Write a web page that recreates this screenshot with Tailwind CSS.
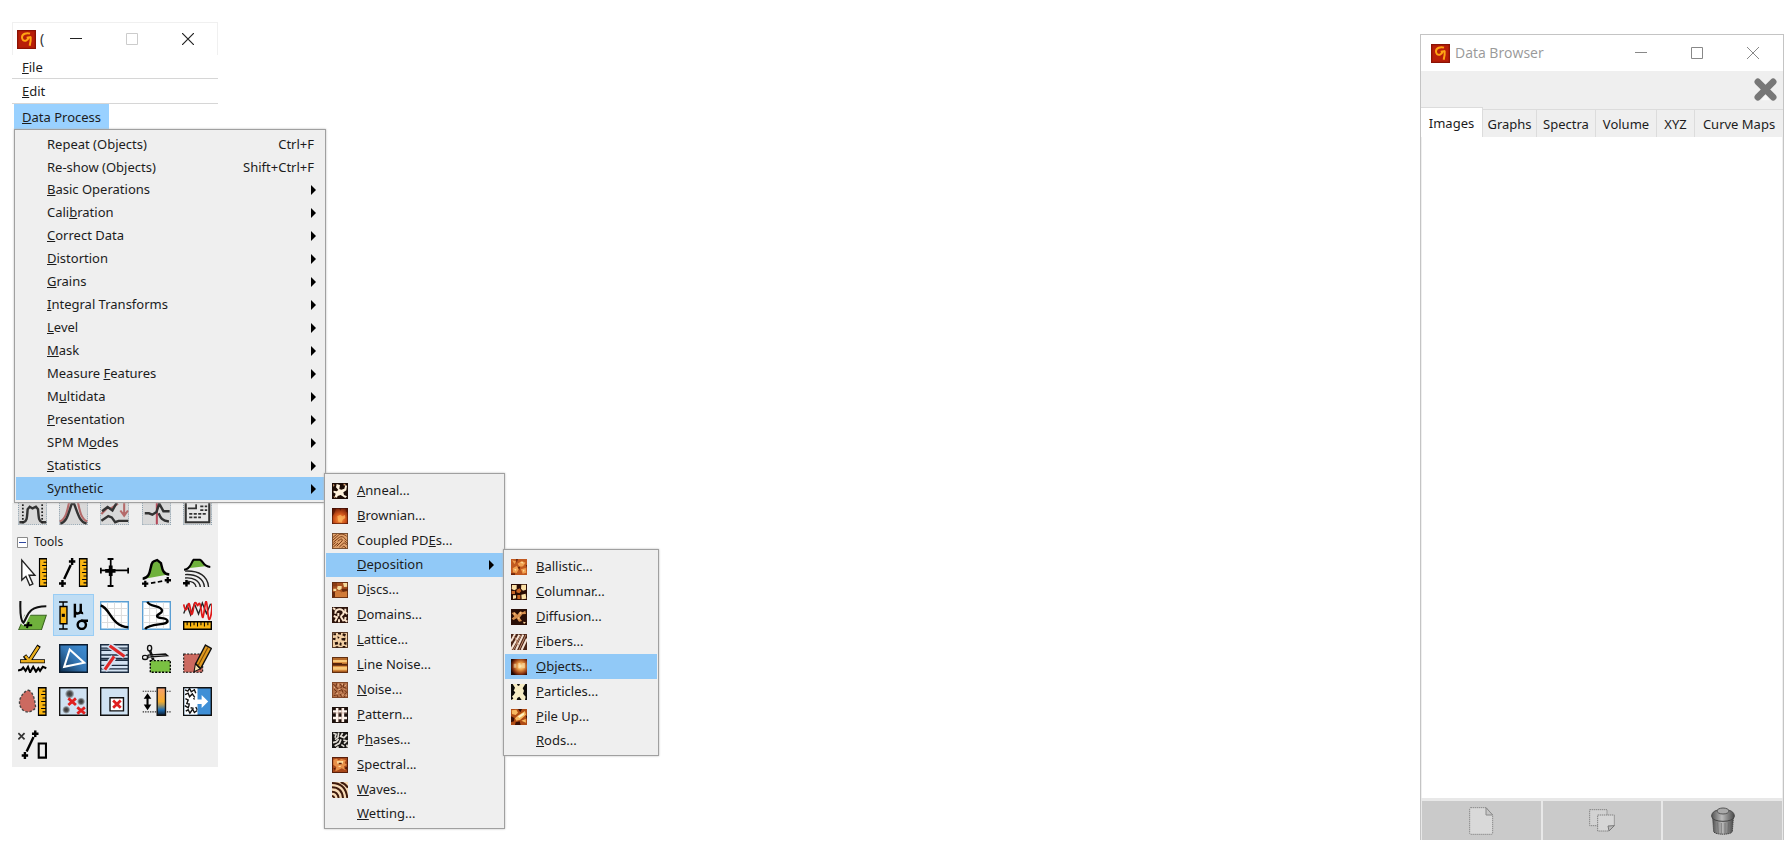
<!DOCTYPE html>
<html lang="en">
<head>
  <meta charset="UTF-8" />
  <meta name="viewport" content="width=device-width, initial-scale=1" />
  <title>Gwyddion</title>
  <script src="https://cdn.jsdelivr.net/npm/@tailwindcss/browser@4"></script>
</head>
<body class="min-h-screen flex items-stretch justify-between bg-white pl-3 pr-[5px] font-['Noto_Sans','Open_Sans',sans-serif] text-[13px] text-[#1c1c1c]">

  <!-- Shared drawings -->
  <svg width="0" height="0" class="absolute" aria-hidden="true">
    <defs>
      <linearGradient id="amber" x1="0" y1="0" x2="0" y2="1"><stop offset="0" stop-color="#f6a070" /><stop offset=".5" stop-color="#f5ac2c" /><stop offset=".62" stop-color="#b09a5a" /><stop offset=".8" stop-color="#1f6cb0" /><stop offset="1" stop-color="#08182c" /></linearGradient>
      <linearGradient id="blue" x1="0" y1="1" x2="1" y2="0"><stop offset="0" stop-color="#0c2c4c" /><stop offset=".5" stop-color="#3476b4" /><stop offset="1" stop-color="#3f8fd6" /></linearGradient>
      <radialGradient id="glow" cx=".6" cy=".45" r=".65"><stop offset="0" stop-color="#fff0b8" /><stop offset=".35" stop-color="#eb9a45" /><stop offset=".75" stop-color="#87300e" /><stop offset="1" stop-color="#220803" /></radialGradient>
      <radialGradient id="ember" cx=".5" cy=".7" r=".75"><stop offset="0" stop-color="#f8a048" /><stop offset=".45" stop-color="#d4581c" /><stop offset="1" stop-color="#6a1806" /></radialGradient>
      <linearGradient id="metal" x1="0" y1="0" x2="1" y2="0"><stop offset="0" stop-color="#555" /><stop offset=".45" stop-color="#bbb" /><stop offset="1" stop-color="#4a4a4a" /></linearGradient>
      <radialGradient id="spot"><stop offset="0" stop-color="#333" /><stop offset=".5" stop-color="#555" /><stop offset="1" stop-color="#555" stop-opacity="0" /></radialGradient>
      <symbol id="logo" viewBox="0 0 57 57">
        <path fill="#b81e08" d="M0 0h57v57H0z" /><path fill="#8c1204" d="M0 0h57v4H0zM0 53h57v4H0zM0 0h4v57H0zM53 0h4v57h-4z" />
        <path fill="none" stroke="#ffa514" stroke-width="6" d="M39 11c-10-3-24 0-24 11 0 8 5 12 12 10 5-2 7-5 8-10M29 23l14-2M41 22c1 9-1 18-3 25" />
      </symbol>
      <symbol id="plus" viewBox="0 0 20 20"><path stroke="#000" stroke-width="7" d="M10 0v20M0 10h20" /></symbol>
      <symbol id="ruler" viewBox="0 0 28 84">
        <path fill="#f9b512" stroke="#000" stroke-width="4" d="M2 2h22v80H2z" />
        <path stroke="#000" stroke-width="3" d="M14 12h10M10 22h14M14 32h10M10 42h14M14 52h10M10 62h14M14 72h10" />
      </symbol>
      <symbol id="arrow" viewBox="0 0 5 10"><path d="M0 0l5 5-5 5z" /></symbol>
    </defs>
  </svg>

  <!-- Toolbox -->
  <aside class="mt-[22px] w-[206px] shrink-0">
    <header class="flex h-[33px] items-center border border-b-0 border-[#f0f0f0] pl-1">
      <svg class="h-[19px] w-[19px] shrink-0"><use href="#logo" /></svg>
      <h1 class="ml-1 text-sm text-[#333]">(</h1>
      <div class="ml-auto flex items-center gap-11 pr-[23px]">
        <button aria-label="Minimize"><svg class="h-3 w-3" viewBox="0 0 12 12"><path stroke="#222" d="M0 5.500h12" /></svg></button>
        <button aria-label="Maximize"><svg class="h-3 w-3" viewBox="0 0 12 12"><path fill="none" stroke="#ccc" d="M.5.5h11v11H.5z" /></svg></button>
        <button aria-label="Close"><svg class="h-3 w-3" viewBox="0 0 12 12"><path stroke="#222" stroke-width="1.200" d="M0 0l12 12M12 0L0 12" /></svg></button>
      </div>
    </header>

    <nav>
      <button class="flex h-6 w-full items-center border-b border-[#d6d6d6] pl-[10px] pt-[2px]"><span><u>F</u>ile</span></button>
      <button class="flex h-[25px] w-full items-center border-b border-[#d6d6d6] pl-[10px] pt-[2px]"><span><u>E</u>dit</span></button>
      <button class="ml-[2px] flex h-[25px] items-center bg-[#99d1ff] px-2 pt-[2px]"><span><u>D</u>ata Process</span></button>

      <ul class="relative z-10 ml-[2px] w-[312px] border border-[#a0a0a0] bg-[#efefef] px-px pt-[2px] pb-[2px] shadow-[0_0_2px_#bbb]">
        <li><button class="flex h-[23px] w-full items-center justify-between pl-[31px] pr-[10px] pt-[2px]"><span>Repeat (Objects)</span><span>Ctrl+F</span></button></li>
        <li><button class="flex h-[23px] w-full items-center justify-between pl-[31px] pr-[10px] pt-[2px]"><span>Re-show (Objects)</span><span>Shift+Ctrl+F</span></button></li>
        <li><button class="flex h-[23px] w-full items-center justify-between pl-[31px] pr-2"><span><u>B</u>asic Operations</span><svg class="h-[10px] w-[5px]"><use href="#arrow" /></svg></button></li>
        <li><button class="flex h-[23px] w-full items-center justify-between pl-[31px] pr-2"><span>Cali<u>b</u>ration</span><svg class="h-[10px] w-[5px]"><use href="#arrow" /></svg></button></li>
        <li><button class="flex h-[23px] w-full items-center justify-between pl-[31px] pr-2"><span><u>C</u>orrect Data</span><svg class="h-[10px] w-[5px]"><use href="#arrow" /></svg></button></li>
        <li><button class="flex h-[23px] w-full items-center justify-between pl-[31px] pr-2"><span><u>D</u>istortion</span><svg class="h-[10px] w-[5px]"><use href="#arrow" /></svg></button></li>
        <li><button class="flex h-[23px] w-full items-center justify-between pl-[31px] pr-2"><span><u>G</u>rains</span><svg class="h-[10px] w-[5px]"><use href="#arrow" /></svg></button></li>
        <li><button class="flex h-[23px] w-full items-center justify-between pl-[31px] pr-2"><span><u>I</u>ntegral Transforms</span><svg class="h-[10px] w-[5px]"><use href="#arrow" /></svg></button></li>
        <li><button class="flex h-[23px] w-full items-center justify-between pl-[31px] pr-2"><span><u>L</u>evel</span><svg class="h-[10px] w-[5px]"><use href="#arrow" /></svg></button></li>
        <li><button class="flex h-[23px] w-full items-center justify-between pl-[31px] pr-2"><span><u>M</u>ask</span><svg class="h-[10px] w-[5px]"><use href="#arrow" /></svg></button></li>
        <li><button class="flex h-[23px] w-full items-center justify-between pl-[31px] pr-2"><span>Measure <u>F</u>eatures</span><svg class="h-[10px] w-[5px]"><use href="#arrow" /></svg></button></li>
        <li><button class="flex h-[23px] w-full items-center justify-between pl-[31px] pr-2"><span>M<u>u</u>ltidata</span><svg class="h-[10px] w-[5px]"><use href="#arrow" /></svg></button></li>
        <li><button class="flex h-[23px] w-full items-center justify-between pl-[31px] pr-2"><span><u>P</u>resentation</span><svg class="h-[10px] w-[5px]"><use href="#arrow" /></svg></button></li>
        <li><button class="flex h-[23px] w-full items-center justify-between pl-[31px] pr-2"><span>SPM M<u>o</u>des</span><svg class="h-[10px] w-[5px]"><use href="#arrow" /></svg></button></li>
        <li><button class="flex h-[23px] w-full items-center justify-between pl-[31px] pr-2"><span><u>S</u>tatistics</span><svg class="h-[10px] w-[5px]"><use href="#arrow" /></svg></button></li>
        <li class="relative">
          <button class="flex h-[23px] w-full items-center justify-between bg-[#91c9f7] pl-[31px] pr-2"><span>Synthetic</span><svg class="h-[10px] w-[5px]"><use href="#arrow" /></svg></button>

          <!-- Synthetic submenu -->
          <ul class="absolute left-full -top-1 w-[181px] border border-[#a0a0a0] bg-[#efefef] px-px pt-1 pb-[2px] shadow-[0_0_2px_#bbb]">
            <li><button class="flex h-[25px] w-full items-center gap-[9px] pl-[6px]">
              <svg class="h-4 w-4" viewBox="0 0 48 48"><path fill="#1c0c06" d="M0 0h48v48H0z" /><path fill="#fff2dc" d="M14 3l10 3-2 12 6 2 9-3 3-11 5 2-2 14-9 6 2 8 9 4-5 5-14-9-9 3-2 5-7-2 3-10-7-4 1-5 9 2 5-4-7-8z" /><path fill="#d8a070" d="M3 3l5 3-4 6zM34 2l8 1-6 6zM4 40l6 1-2 5z" /></svg>
              <span><u>A</u>nneal...</span></button></li>
            <li><button class="flex h-[25px] w-full items-center gap-[9px] pl-[6px]">
              <svg class="h-4 w-4" viewBox="0 0 48 48"><path fill="url(#ember)" d="M0 0h48v48H0z" /><path fill="#4a1204" fill-opacity=".6" d="M0 0h12l-2 9-4 9-6 8zM20 0h9l-3 8zM40 0h8v14l-6-3z" /><path fill="#ffb860" fill-opacity=".7" d="M16 25l9-5 6 5 8-4 1 9-8 5-3 9-10-3z" /><path fill="none" stroke="#3a0e04" stroke-width="2" d="M1 1h46v46H1z" /></svg>
              <span><u>B</u>rownian...</span></button></li>
            <li><button class="flex h-[25px] w-full items-center gap-[9px] pl-[6px]">
              <svg class="h-4 w-4" viewBox="0 0 48 48"><path fill="#e0a26c" d="M0 0h48v48H0z" /><path fill="none" stroke="#7a3a14" stroke-width="3" d="M2 14L14 4M2 22L20 6c6-5 18-2 24 4M4 28l18-15c6-4 12-2 16 3l6 7M2 36l9-8M17 25l8-6c4-3 8 1 5 5L14 40M4 42l14-12M46 32l-8-9M22 42l12-11c4-3 7 1 10 5M30 44l5-5 7 6" /><path fill="none" stroke="#2b1208" stroke-width="2" d="M1 1h46v46H1z" /></svg>
              <span>Coupled PD<u>E</u>s...</span></button></li>
            <li class="relative">
              <button class="flex h-6 w-full items-center justify-between bg-[#91c9f7] pl-[31px] pr-[9px]"><span><u>D</u>eposition</span><svg class="h-[10px] w-[5px]"><use href="#arrow" /></svg></button>

              <!-- Deposition submenu -->
              <ul class="absolute left-full -top-1 w-[156px] border border-[#a0a0a0] bg-[#efefef] px-px pt-1 pb-[2px] shadow-[0_0_2px_#bbb]">
                <li><button class="flex h-[25px] w-full items-center gap-[9px] pl-[6px]">
                  <svg class="h-4 w-4" viewBox="0 0 48 48"><path fill="#c25a20" d="M0 0h48v48H0z" /><path fill="#f0a050" d="M3 4l12 3-4 9zM20 14l12-8 12 5-8 11-10 2zM5 28l12-7 7 8-7 13-11-2zM30 31l14-4 2 14-11 3z" /><path fill="#ffd898" d="M27 11l8-3 3 6zM9 31l7-2-1 7zM36 32l5 2-4 5z" /><path fill="#6e2408" d="M15 0h6l-4 12zM20 25l8-3-3 12zM0 43h12v5H0zM44 18h4v9z" /></svg>
                  <span><u>B</u>allistic...</span></button></li>
                <li><button class="flex h-[25px] w-full items-center gap-[9px] pl-[6px]">
                  <svg class="h-4 w-4" viewBox="0 0 48 48"><path fill="#2a0c04" d="M0 0h48v48H0z" /><path fill="#fbe0a6" d="M3 3h14v12l-7 4-8-4zM31 2h14v15l-9 3-6-6zM6 34h9v9l-9 2zM31 32l13-3 2 15-14 2z" /><path fill="#c86424" d="M17 17l9-4 5 8-6 7-9-3zM2 21h10v9H2zM19 33h9v12h-9z" /></svg>
                  <span><u>C</u>olumnar...</span></button></li>
                <li><button class="flex h-[25px] w-full items-center gap-[9px] pl-[6px]">
                  <svg class="h-4 w-4" viewBox="0 0 48 48"><path fill="#2a0e06" d="M0 0h48v48H0z" /><path fill="#d8904e" d="M2 12l9-3 8 8 9-10 7 3 8-5 2 10-11 1-8 10 7 10-9 2-7-10-9 5-6-4 8-7z" /><path fill="#fcd49a" d="M26 9l6 2-6 6zM9 12l5 3-4 2zM21 25l6 2-5 3zM36 38l9 2-6 5z" /></svg>
                  <span><u>D</u>iffusion...</span></button></li>
                <li><button class="flex h-[25px] w-full items-center gap-[9px] pl-[6px]">
                  <svg class="h-4 w-4" viewBox="0 0 48 48"><path fill="#4a2416" d="M0 0h48v48H0z" /><path stroke="#f6e2d2" stroke-width="6" d="M0 22L12 0M0 47L25 2M15 48L37 2M32 48L48 14" /><path stroke="#c08a6c" stroke-width="3" d="M7 48L31 2M24 48L45 2M10 6l12 28" /></svg>
                  <span><u>F</u>ibers...</span></button></li>
                <li><button class="flex h-[25px] w-full items-center gap-[9px] bg-[#91c9f7] pl-[6px]">
                  <svg class="h-4 w-4" viewBox="0 0 48 48"><path fill="url(#glow)" d="M0 0h48v48H0z" /><path fill="#fff2c4" fill-opacity=".5" d="M8 14h8v12H8zM22 12h6v16h-6zM34 12h8v16h-8z" /></svg>
                  <span><u>O</u>bjects...</span></button></li>
                <li><button class="flex h-[25px] w-full items-center gap-[9px] pl-[6px]">
                  <svg class="h-4 w-4" viewBox="0 0 48 48"><path fill="#f6ecc4" d="M0 0h48v48H0z" /><path fill="#0c0a08" d="M0 0h5l7 11-4 9 5 5-5 8-5 4 4 7-7 4zM18 0h9l-3 6-5-2zM43 0h5v48h-6l2-10-8-9 3-9-4-7zM19 42l6-4 7 10H17z" /></svg>
                  <span><u>P</u>articles...</span></button></li>
                <li><button class="flex h-[25px] w-full items-center gap-[9px] pl-[6px]">
                  <svg class="h-4 w-4" viewBox="0 0 48 48"><path fill="#b04c14" d="M0 0h48v48H0z" /><path fill="#f8b860" d="M2 4l14-2 5 9-7 7-11-3zM20 20l22-14 3 11-17 15-12 3-4-7zM31 35l13-5 1 11z" /><path fill="#fff4c8" d="M21 22l17-11 1 6-14 10z" /><path fill="#3a0e04" d="M21 0h12l-5 10zM0 22l10 5-1 10-9 3zM14 40l12-3 3 11H12zM44 20h4v12z" /></svg>
                  <span><u>P</u>ile Up...</span></button></li>
                <li><button class="flex h-6 w-full items-center pl-[31px]"><span><u>R</u>ods...</span></button></li>
              </ul>
            </li>
            <li><button class="flex h-[25px] w-full items-center gap-[9px] pl-[6px]">
              <svg class="h-4 w-4" viewBox="0 0 48 48"><path fill="#a85020" d="M0 0h48v48H0z" /><path fill="#f6dc9c" d="M17 12h12v9l-8 4-6-5zM33 3h13v11l-10 1zM4 20h9v7H4z" /><path fill="#8a3c14" d="M2 2h13v11H2z" /><path fill="#d07a38" d="M6 38c0-14 18-14 22-6 3-6 14-10 18-3v17H6z" /><path fill="#6a2a0c" d="M28 20h18v7l-14 3zM2 30h7v15H2z" /><path fill="none" stroke="#3a1608" stroke-width="2" d="M1 1h46v46H1z" /></svg>
              <span>D<u>i</u>scs...</span></button></li>
            <li><button class="flex h-[25px] w-full items-center gap-[9px] pl-[6px]">
              <svg class="h-4 w-4" viewBox="0 0 48 48"><path fill="#2c120a" d="M0 0h48v48H0z" /><path fill="none" stroke="#fbe4cc" stroke-width="6" d="M3 3l7 5M10 20c0-16 24-18 25-3 0 8-8 6-8 13l8 13M19 18v10M5 27l10 4-6 12M40 5v10l6 6M41 30l-2 10 7 4M21 37v9" /></svg>
              <span><u>D</u>omains...</span></button></li>
            <li><button class="flex h-[25px] w-full items-center gap-[9px] pl-[6px]">
              <svg class="h-4 w-4" viewBox="0 0 48 48"><path fill="#f2cfa4" d="M0 0h48v48H0z" /><path fill="#2a140a" d="M4 4h8v6H4zM18 2h9v6l-9-1zM33 4l9 2-3 8-8-4zM3 18l8-1-1 8-7-2zM16 13l7 3-5 5zM28 19l13-2-2 9-10-1zM8 31l9-2 2 8-9 2zM24 31l5 2-1 9-6-3zM36 31l8-1-1 9-7-2zM11 43h8v4h-8zM32 42h8v5h-8z" /><path fill="none" stroke="#3a1c0e" stroke-width="3" d="M1 1h46v46H1z" /></svg>
              <span><u>L</u>attice...</span></button></li>
            <li><button class="flex h-[25px] w-full items-center gap-[9px] pl-[6px]">
              <svg class="h-4 w-4" viewBox="0 0 48 48"><path fill="#dc9040" d="M0 0h48v48H0z" /><path fill="#f8c878" d="M2 9h44v6H2zM2 30h44v8H2z" /><path fill="#5a240a" d="M2 18h28v2h16v6H2z" /><path fill="#a85c20" d="M2 4h44v4H2zM2 41h44v4H2z" /><path fill="none" stroke="#4a1c08" stroke-width="3" d="M1 1h46v46H1z" /></svg>
              <span><u>L</u>ine Noise...</span></button></li>
            <li><button class="flex h-[25px] w-full items-center gap-[9px] pl-[6px]">
              <svg class="h-4 w-4" viewBox="0 0 48 48"><path fill="#b47048" d="M0 0h48v48H0z" /><path fill="none" stroke="#6c3014" stroke-width="3" d="M4 6l6 6M14 4l-3 12 8 4M24 6l6 8-6 5M36 5l-3 10 10 4M6 22l8 6-5 7M20 26l10-3 3 9M38 25l6 6-7 6M5 41l9-3 4 7M24 36l5 8M40 42l-5 4" /><path fill="none" stroke="#eab48a" stroke-width="3" d="M19 5l-1 9M30 4l2 5M42 8l-4 5M5 15l5 3M26 21l-8 3M36 20l3 3M18 33l-7 4M28 31l-3 3M34 36l-3 5M44 38l-2 4" /><path fill="none" stroke="#5a2a12" stroke-width="2" d="M1 1h46v46H1z" /></svg>
              <span><u>N</u>oise...</span></button></li>
            <li><button class="flex h-[25px] w-full items-center gap-[9px] pl-[6px]">
              <svg class="h-4 w-4" viewBox="0 0 48 48"><path fill="#1c100c" d="M0 0h48v48H0z" /><path stroke="#fff4ec" stroke-width="7" d="M15 3v42M33 3v42M3 13h42M3 33h42" /><path stroke="#c8a898" stroke-width="2" d="M20 3v42M29 3v42M3 18h42" /></svg>
              <span><u>P</u>attern...</span></button></li>
            <li><button class="flex h-[25px] w-full items-center gap-[9px] pl-[6px]">
              <svg class="h-4 w-4" viewBox="0 0 48 48"><path fill="#161412" d="M0 0h48v48H0z" /><path fill="none" stroke="#e2ded6" stroke-width="5" d="M4 4l8 3-3 10M20 2l-2 14-9 7M32 3l-6 10 10 4 9-9M3 32l10-3 7-8M27 22l-5 12-14 8M34 24l10 3-8 8M28 38l9 6M20 44l-7 4M44 38l3 8" /></svg>
              <span>P<u>h</u>ases...</span></button></li>
            <li><button class="flex h-[25px] w-full items-center gap-[9px] pl-[6px]">
              <svg class="h-4 w-4" viewBox="0 0 48 48"><path fill="#a8481a" d="M0 0h48v48H0z" /><path fill="#e89048" d="M4 8l10-3 6 5 8-4 14 3-4 9 7 6-9 4 5 12-12-6-8 4-11 5 3-13-9-7z" /><path fill="#ffe0a0" d="M14 13l20-1-2 8-15 1zM17 27l11-1-4 5z" /><path fill="#5a1c08" d="M20 17h9v5h-9zM36 33l9-4v9zM4 34l7-2-2 8z" /><path fill="none" stroke="#4a1808" stroke-width="3" d="M1 1h46v46H1z" /></svg>
              <span><u>S</u>pectral...</span></button></li>
            <li><button class="flex h-[25px] w-full items-center gap-[9px] pl-[6px]">
              <svg class="h-4 w-4" viewBox="0 0 48 48"><path fill="#f8dcb8" d="M0 0h48v48H0z" /><path fill="none" stroke="#3e1a0c" stroke-width="6" d="M0 42c4 0 6 2 7 6M0 29c12 0 18 7 20 19M0 16c20 0 31 13 33 32M0 3c28 0 43 18 46 45M26 0c8 3 17 9 22 17" /></svg>
              <span><u>W</u>aves...</span></button></li>
            <li><button class="flex h-6 w-full items-center pl-[31px]"><span><u>W</u>etting...</span></button></li>
          </ul>
        </li>
      </ul>
    </nav>

    <section class="bg-[#efefef] pb-px">
      <!-- Graph functions, upper part is under the open menu -->
      <div class="grid h-[22px] grid-cols-5 content-end overflow-hidden">
        <button class="grid place-items-center" aria-label="Terrace"><svg class="h-[29px] w-[29px]" viewBox="0 0 84 84"><path fill="#d9d9d9" stroke="#7d95a5" stroke-width="3" stroke-dasharray="3 3" d="M1 1h82v82H1z" /><path fill="none" stroke="#333" stroke-width="7" d="M4 76h12c10-2 10-12 12-38l6-7 8 5 10-5 6 7c2 26 2 36 12 38h12" /><path stroke="#222" stroke-width="5" stroke-dasharray="5 5" d="M14 14v70M70 14v70" /></svg></button>
        <button class="grid place-items-center" aria-label="Fit function"><svg class="h-[29px] w-[29px]" viewBox="0 0 84 84"><path fill="#d9d9d9" stroke="#7d95a5" stroke-width="3" stroke-dasharray="3 3" d="M1 1h82v82H1z" /><path fill="none" stroke="#b56a6a" stroke-width="6" d="M2 74c18-8 22-30 28-60M82 74C64 66 60 44 54 14" /><path fill="none" stroke="#333" stroke-width="7" d="M4 80c22-6 24-36 36-66 14 30 16 60 40 66" /></svg></button>
        <button class="grid place-items-center" aria-label="Align curves"><svg class="h-[29px] w-[29px]" viewBox="0 0 84 84"><path fill="#d9d9d9" stroke="#7d95a5" stroke-width="3" stroke-dasharray="3 3" d="M1 1h82v82H1z" /><path fill="none" stroke="#b56a6a" stroke-width="6" d="M4 52l18-18 10 2 20-14M70 16v38M59 42l11 15 11-15" /><path fill="none" stroke="#333" stroke-width="7" d="M6 44l16-12 14 10 12-22M4 72l20-14 10 4 10 14 10-4h28" /></svg></button>
        <button class="grid place-items-center" aria-label="Cut curve"><svg class="h-[29px] w-[29px]" viewBox="0 0 84 84"><path fill="#d9d9d9" stroke="#7d95a5" stroke-width="3" stroke-dasharray="3 3" d="M1 1h82v82H1z" /><path stroke="#b54a5a" stroke-width="6" d="M43 8v74" /><path fill="none" stroke="#333" stroke-width="7" d="M8 50h12l10 4 12-8 8-24 12 22h18M48 50c6 14 10 22 30 24" /></svg></button>
        <button class="grid place-items-center" aria-label="Export text"><svg class="h-[29px] w-[29px]" viewBox="0 0 84 84"><path fill="#d9d9d9" stroke="#7d95a5" stroke-width="3" stroke-dasharray="3 3" d="M1 1h82v82H1z" /><path fill="#e8e8e8" stroke="#333" stroke-width="6" d="M8 10h68v66H8z" /><path fill="none" stroke="#333" stroke-width="5" d="M14 36h24V24" /><path stroke="#333" stroke-width="5" stroke-dasharray="9 4" d="M50 30h20M50 41h20M18 52h50M18 62h34" /></svg></button>
      </div>

      <div class="flex h-[26px] items-center gap-[6px] pl-[5px] pt-2 text-[12px]">
        <button aria-label="Collapse Tools"><svg class="h-[11px] w-[11px]" viewBox="0 0 11 11"><path fill="#fff" stroke="#8a8a8a" d="M.5.5h10v10H.5z" /><path stroke="#3048a0" d="M2 5.500h7" /></svg></button>
        <h2>Tools</h2>
      </div>

      <div class="grid auto-rows-[43px] grid-cols-5">
        <button class="grid place-items-center" aria-label="Read value"><svg class="h-[29px] w-[29px]" viewBox="0 0 84 84"><path fill="#fff" stroke="#222" stroke-width="4" d="M11 6v58l12-11 11 26 9-4-11-25h17z" /><use href="#ruler" x="60" width="28" height="84" /></svg></button>
        <button class="grid place-items-center" aria-label="Distance"><svg class="h-[29px] w-[29px]" viewBox="0 0 84 84"><path stroke="#000" stroke-width="7" d="M15 61l19-41" /><use href="#plus" x="28" width="20" height="20" /><use href="#plus" y="64" width="20" height="20" /><use href="#ruler" x="57" width="28" height="84" /></svg></button>
        <button class="grid place-items-center" aria-label="Profile cross"><svg class="h-[29px] w-[29px]" viewBox="0 0 84 84"><path stroke="#000" stroke-width="5" d="M31 3v80M2 36h80" /><path stroke="#000" stroke-width="6" d="M22 3h17M22 81h17M2 28v17M82 28v17" /><path stroke="#000" stroke-width="11" d="M31 22v30M15 37h30" /></svg></button>
        <button class="grid place-items-center" aria-label="Profiles"><svg class="h-[29px] w-[29px]" viewBox="0 0 84 84"><path fill="#6fb13c" d="M8 60c22-8 16-36 26-50h18c8 16 6 34 24 38z" /><path fill="none" stroke="#000" stroke-width="7" d="M2 60c26-2 20-38 29-48 5-4 9-4 13-6l11 9c4 16 4 31 24 33" /><path stroke="#000" stroke-width="5" stroke-dasharray="13 7" d="M26 73l34-6" /><use href="#plus" y="65" width="19" height="19" /><use href="#plus" x="65" y="55" width="19" height="19" /></svg></button>
        <button class="grid place-items-center" aria-label="Radial profiles"><svg class="h-[29px] w-[29px]" viewBox="0 0 84 84"><path fill="#6fb13c" d="M14 30L30 6h20l14 18z" /><path fill="none" stroke="#000" stroke-width="6" d="M3 34c21 0 21-25 28-29h18c10 3 8 19 30 21" /><path fill="none" stroke="#222" stroke-width="4" d="M6 38c40-2 66 14 68 46M6 48c32-2 54 12 56 36M6 58c24-2 42 8 44 26M10 67c16 0 26 5 28 17" /><use href="#plus" y="63" width="20" height="20" /></svg></button>

        <button class="grid place-items-center" aria-label="Spectro"><svg class="h-[29px] w-[29px]" viewBox="0 0 84 84"><path fill="#6fb13c" stroke="#3b6420" stroke-width="3" d="M20 41h62L68 83H2z" /><path fill="none" stroke="#efefef" stroke-width="14" d="M7 0c-1 30 0 58 9 63 13-18 10-48 66-48" /><path fill="none" stroke="#111" stroke-width="6" d="M7 0c-1 30 0 58 9 63 13-18 10-48 66-48" /><path stroke="#000" stroke-width="6" d="M17 70h24M31 61l-5 17" /></svg></button>
        <button class="grid h-[42px] place-items-center border border-[#99cdf5] bg-[#bfddf4]" aria-label="Statistical quantities"><svg class="h-[29px] w-[29px]" viewBox="0 0 84 84"><path stroke="#000" stroke-width="4" d="M12 2v80M0 3h25M0 81h25" /><path fill="#f9b512" stroke="#000" stroke-width="4" d="M3 16h20v50H3z" /><path d="M8 37h9v9H8z" /><path fill="none" stroke="#000" stroke-width="7" d="M46 8v40M46 12v16q0 8 8 8 9 0 9-9V8M63 27q0 9 7 8M84 57H64" /><circle cx="66" cy="69" r="12" fill="none" stroke="#000" stroke-width="7" /></svg></button>
        <button class="grid place-items-center" aria-label="Statistical functions"><svg class="h-[29px] w-[29px]" viewBox="0 0 84 84"><path fill="#fff" stroke="#5a9fd4" stroke-width="4" d="M2 2h80v80H2z" /><path stroke="#ddd" stroke-width="3" d="M22 4v76M42 4v76M62 4v76M4 22h76M4 42h76M4 62h76" /><path fill="none" stroke="#000" stroke-width="7" d="M2 13c28 7 29 60 80 63" /></svg></button>
        <button class="grid place-items-center" aria-label="Row statistics"><svg class="h-[29px] w-[29px]" viewBox="0 0 84 84"><path fill="#fff" stroke="#5a9fd4" stroke-width="4" d="M2 2h80v80H2z" /><path stroke="#ddd" stroke-width="3" d="M22 4v76M42 4v76M62 4v76M4 22h76M4 42h76M4 62h76" /><path fill="none" stroke="#000" stroke-width="7" d="M16 2c4 16 42 10 42 26 0 10-16 9-14 17 3 7 30 2 30 13 0 14-50 5-65 23" /></svg></button>
        <button class="grid place-items-center" aria-label="Roughness"><svg class="h-[29px] w-[29px]" viewBox="0 0 84 84"><path fill="none" stroke="#222" stroke-width="4" d="M2 36l10-24 10 28L33 8l12 30L56 6l12 30L80 8" /><path fill="none" stroke="#e01818" stroke-width="5" d="M2 10c4 20 8 20 12 4 4-16 6 0 10 24C30 44 30 4 36 5s4 14 8 6 6-6 10 24 6 0 10-24 6 4 8 24 4 24 8 10 4-30 4-38" /><g transform="translate(0 84) rotate(-90)"><path fill="#f9b512" stroke="#000" stroke-width="4" d="M2 2h22v80H2z" /><path stroke="#000" stroke-width="3" d="M14 12h10M10 22h14M14 32h10M10 42h14M14 52h10M10 62h14M14 72h10" /></g></svg></button>

        <button class="grid place-items-center" aria-label="Three point level"><svg class="h-[29px] w-[29px]" viewBox="0 0 84 84"><path fill="none" stroke="#000" stroke-width="12" d="M6 50h72M31 49L19 33M33 48L61 5" /><path fill="none" stroke="#eaae1c" stroke-width="7" d="M8 50h68M32 48L21 35M33 48L59 8" /><path fill="none" stroke="#000" stroke-width="6" d="M0 77l10-3 5-6 7 10 7-12 6 16 9-16 8 14 7-10 5 8 8-12 10 4" /></svg></button>
        <button class="grid place-items-center" aria-label="Facet level"><svg class="h-[29px] w-[29px]" viewBox="0 0 84 84"><path fill="url(#blue)" stroke="#0a1c30" stroke-width="4" d="M2 2h80v80H2z" /><path fill="none" stroke="#fff" stroke-width="6" d="M31 16l42 38-58 12z" /></svg></button>
        <button class="grid place-items-center" aria-label="Path level"><svg class="h-[29px] w-[29px]" viewBox="0 0 84 84"><path fill="#d3e2f2" stroke="#1c2c40" stroke-width="4" d="M2 2h80v80H2z" /><path stroke="#1c2c40" stroke-width="4" d="M2 12h80M2 18h80M2 32h80M2 42h80M2 47h80M2 62h80M2 72h80" /><path stroke="#d3e2f2" stroke-width="18" d="M26 3l46 32M40 38L13 76" /><path stroke="#e02828" stroke-width="9" d="M28 5l43 31M41 36L14 74" /></svg></button>
        <button class="grid place-items-center" aria-label="Crop"><svg class="h-[29px] w-[29px]" viewBox="0 0 84 84"><path fill="#7ac142" stroke="#000" stroke-width="4" stroke-dasharray="6 4" d="M24 48h58v34H24z" /><g fill="none" stroke="#111" stroke-width="4"><ellipse cx="9" cy="39" rx="8" ry="6" /><ellipse cx="22" cy="12" rx="6" ry="8" /><path fill="#fff" d="M16 38l58-4-6-5-50 3zM25 19l9 25-4 1-8-24z" /></g></svg></button>
        <button class="grid place-items-center" aria-label="Mask editor"><svg class="h-[29px] w-[29px]" viewBox="0 0 84 84"><path fill="#cc6a60" stroke="#111" stroke-width="3" stroke-dasharray="6 4" d="M2 29h55v53H2z" /><path fill="#f5e0b0" stroke="#111" stroke-width="3" d="M36 57l14 15-18 8z" /><path fill="#e09a20" stroke="#111" stroke-width="4" d="M65 3l17 10-31 58-14-14z" /><path stroke="#7a4a08" stroke-width="3" d="M72 10L44 62" /></svg></button>

        <button class="grid place-items-center" aria-label="Grain measure"><svg class="h-[29px] w-[29px]" viewBox="0 0 84 84"><path fill="#cc6a60" stroke="#444" stroke-width="4" stroke-dasharray="7 5" d="M30 9c16 6 20 36 21 51-8 11-23 16-34 9C5 61 2 45 6 35 11 22 19 12 30 9z" /><use href="#ruler" x="57" width="28" height="84" /></svg></button>
        <button class="grid place-items-center" aria-label="Grain remover"><svg class="h-[29px] w-[29px]" viewBox="0 0 84 84"><path fill="#d0e2f2" stroke="#111" stroke-width="4" d="M2 2h80v80H2z" /><circle cx="31" cy="20" r="14" fill="url(#spot)" /><circle cx="64" cy="42" r="12" fill="url(#spot)" /><circle cx="21" cy="66" r="12" fill="url(#spot)" /><path stroke="#e02020" stroke-width="8" d="M27 33l22 19M49 33L27 52M53 59l22 18M75 59L53 77" /></svg></button>
        <button class="grid place-items-center" aria-label="Spot remover"><svg class="h-[29px] w-[29px]" viewBox="0 0 84 84"><path fill="#d0e2f2" stroke="#111" stroke-width="4" d="M2 2h80v80H2z" /><path fill="#fff" stroke="#111" stroke-width="4" d="M29 31h39v38H29z" /><path stroke="#e02020" stroke-width="8" d="M38 39l22 21M60 39L38 60" /></svg></button>
        <button class="grid place-items-center" aria-label="Color range"><svg class="h-[29px] w-[29px]" viewBox="0 0 84 84"><path stroke="#333" stroke-width="3" stroke-dasharray="4 3" d="M2 12h82M2 72h82" /><path fill="url(#amber)" stroke="#111" stroke-width="4" d="M44 2h24v80H44z" /><path stroke="#000" stroke-width="6" d="M16 26v34" /><path d="M16 18l11 16H5zM16 67l11-16H5z" /></svg></button>
        <button class="grid place-items-center" aria-label="Filter"><svg class="h-[29px] w-[29px]" viewBox="0 0 84 84"><path fill="#3f8fd6" stroke="#111" stroke-width="4" d="M2 2h80v80H2z" /><path fill="#fff" d="M4 4h38v76H4z" /><path fill="none" stroke="#111" stroke-width="4" d="M6 8l8 4 5-8 5 10 9-6 4 10M6 22l9-4 4 10 8-8 7 10M7 34l8 4-4 10 9 2M5 54l10 6 3-8M8 70l7-4 5 10 8-12 5 10 8-6M22 60l9 2M25 44l9-4-3-8M37 58l4 8" /><path fill="#fff" d="M22 36h32V23l19 19-19 19V49H22z" /></svg></button>

        <button class="grid place-items-center" aria-label="Selection manager"><svg class="h-[29px] w-[29px]" viewBox="0 0 84 84"><path stroke="#333" stroke-width="5" d="M1 9l18 18M19 9L1 27" /><path stroke="#000" stroke-width="7" d="M25 62l20-42" /><use href="#plus" x="40" y="1" width="20" height="20" /><use href="#plus" x="10" y="64" width="20" height="20" /><path fill="#efefef" stroke="#000" stroke-width="6" d="M60 39h21v41H60z" /></svg></button>
      </div>
    </section>
  </aside>

  <!-- Data Browser -->
  <main class="mt-[34px] mb-7 flex w-[364px] shrink-0 flex-col border border-b-0 border-[#c4c4c4] bg-[#efefef]">
    <header class="flex h-9 items-center bg-white pl-[10px] pr-6 font-['Open_Sans','Noto_Sans',sans-serif] text-sm text-[#999]">
      <svg class="mr-[5px] h-[19px] w-[19px]"><use href="#logo" /></svg>
      <h1>Data Browser</h1>
      <div class="ml-auto flex items-center gap-11">
        <button aria-label="Minimize"><svg class="h-3 w-3" viewBox="0 0 12 12"><path stroke="#888" d="M0 5.500h12" /></svg></button>
        <button aria-label="Maximize"><svg class="h-3 w-3" viewBox="0 0 12 12"><path fill="none" stroke="#888" d="M.5.5h11v11H.5z" /></svg></button>
        <button aria-label="Close"><svg class="h-3 w-3" viewBox="0 0 12 12"><path stroke="#888" d="M0 0l12 12M12 0L0 12" /></svg></button>
      </div>
    </header>

    <div class="flex h-9 items-center justify-end pr-[6px]">
      <button aria-label="Close file"><svg class="h-[23px] w-[23px]" viewBox="0 0 66 66"><path fill="none" stroke="#777" stroke-width="19" stroke-linecap="round" d="M11 11l44 44M55 11L11 55" /><path fill="#fff" fill-opacity=".7" d="M20 64l13-16 13 16z" /></svg></button>
    </div>

    <div role="tablist" class="flex items-end whitespace-nowrap">
      <button role="tab" aria-selected="true" class="h-[30px] w-[62px] border-t border-r border-[#dcdcdc] bg-white pt-[2px]">Images</button>
      <button role="tab" class="h-7 w-[54px] border-t border-r border-[#dcdcdc] pt-[2px]">Graphs</button>
      <button role="tab" class="h-7 w-[59px] border-t border-r border-[#dcdcdc] pt-[2px]">Spectra</button>
      <button role="tab" class="h-7 w-[61px] border-t border-r border-[#dcdcdc] pt-[2px]">Volume</button>
      <button role="tab" class="h-7 w-[38px] border-t border-r border-[#dcdcdc] pt-[2px]">XYZ</button>
      <button role="tab" class="h-7 flex-1 border-t border-[#dcdcdc] pt-[2px]">Curve Maps</button>
    </div>

    <section class="mx-px flex-1 bg-white"></section>

    <footer class="grid grid-cols-3 gap-[2px] bg-[#e8e8e8] px-px pt-[3px]">
      <button class="grid h-[39px] place-items-center bg-[#cacaca]" aria-label="New"><svg class="h-7 w-[25px]" viewBox="0 0 75 84"><path fill="#d9d9d9" stroke="#8a8a8a" stroke-width="3" stroke-dasharray="4 2" d="M5 2h46l20 22v54q0 4-4 4H6q-4 0-4-4V6q0-4 3-4z" /><path fill="#c6c6c6" stroke="#8a8a8a" stroke-width="3" d="M51 2v22h20z" /></svg></button>
      <button class="grid h-[39px] place-items-center bg-[#cacaca]" aria-label="Duplicate"><svg class="h-6 w-[26px]" viewBox="0 0 78 72"><path fill="#d2d2d2" stroke="#858585" stroke-width="3" stroke-dasharray="4 2" d="M2 2h52v48H2z" /><path fill="#d6d6d6" stroke="#808080" stroke-width="3" stroke-dasharray="4 2" d="M26 18h50v32L60 66H26z" /><path fill="#bbb" stroke="#777" stroke-width="3" d="M60 66l-3-15 19-1z" /></svg></button>
      <button class="grid h-[39px] place-items-center bg-[#cacaca]" aria-label="Delete"><svg class="h-7 w-6" viewBox="0 0 72 84"><path fill="url(#metal)" stroke="#444" stroke-width="3" stroke-dasharray="4 2" d="M5 34l3 40c4 10 52 10 56 0l3-40z" /><path stroke="#666" stroke-width="2" d="M20 46l2 34M31 48v34M42 48v34M53 46l-2 34" /><path fill="url(#metal)" stroke="#444" stroke-width="3" d="M2 28C2 14 14 8 36 8s34 6 34 20c0 20-68 20-68 0z" /><ellipse cx="36" cy="12" rx="18" ry="9" fill="#aaa" stroke="#555" stroke-width="3" /></svg></button>
    </footer>
  </main>

</body>
</html>
